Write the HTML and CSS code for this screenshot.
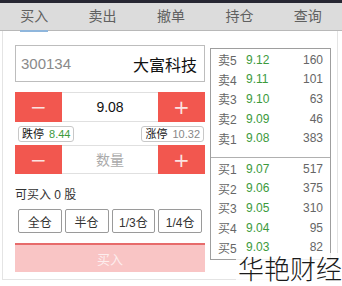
FILE: index.html
```html
<!DOCTYPE html>
<html lang="zh-CN">
<head>
    <meta charset="UTF-8">
    <meta name="viewport" content="width=device-width, initial-scale=1.0">
    <title>买入</title>
    <link rel="stylesheet" href="styles.css">
</head>
<body>
    <div class="topbar"></div>
    <div class="tabs">
        <div class="tab active">买入</div>
        <div class="tab">卖出</div>
        <div class="tab">撤单</div>
        <div class="tab">持仓</div>
        <div class="tab">查询</div>
    </div>
    <div class="container">
        <div class="trade">
            <div class="stock">
                <span class="code">300134</span>
                <span class="name">大富科技</span>
            </div>
            <div class="stepper price">
                <button class="step">−</button>
                <div class="value">9.08</div>
                <button class="step">+</button>
            </div>
            <div class="limits">
                <span class="limit">跌停 <em>8.44</em></span>
                <span class="limit">涨停 <em class="grey">10.32</em></span>
            </div>
            <div class="stepper">
                <button class="step">−</button>
                <div class="value placeholder">数量</div>
                <button class="step">+</button>
            </div>
            <div class="avail">可买入 0 股</div>
            <div class="portions">
                <button>全仓</button>
                <button>半仓</button>
                <button>1/3仓</button>
                <button>1/4仓</button>
            </div>
            <button class="buy">买入</button>
        </div>
        <div class="book">
            <div class="side sell">
                <div class="row"><span class="lbl">卖5</span><span class="px">9.12</span><span class="vol">160</span></div>
                <div class="row"><span class="lbl">卖4</span><span class="px">9.11</span><span class="vol">101</span></div>
                <div class="row"><span class="lbl">卖3</span><span class="px">9.10</span><span class="vol">63</span></div>
                <div class="row"><span class="lbl">卖2</span><span class="px">9.09</span><span class="vol">46</span></div>
                <div class="row"><span class="lbl">卖1</span><span class="px">9.08</span><span class="vol">383</span></div>
            </div>
            <div class="side">
                <div class="row"><span class="lbl">买1</span><span class="px">9.07</span><span class="vol">517</span></div>
                <div class="row"><span class="lbl">买2</span><span class="px">9.06</span><span class="vol">375</span></div>
                <div class="row"><span class="lbl">买3</span><span class="px">9.05</span><span class="vol">310</span></div>
                <div class="row"><span class="lbl">买4</span><span class="px">9.04</span><span class="vol">95</span></div>
                <div class="row"><span class="lbl">买5</span><span class="px">9.03</span><span class="vol">82</span></div>
            </div>
        </div>
    </div>
    <div class="watermark">华艳财经</div>
</body>
</html>
```
FILE: styles.css
```css
body {
    margin: 0;
    width: 342px;
    height: 286px;
    overflow: hidden;
    background: #fff;
    font-family: "Liberation Sans", "Noto Sans CJK SC", sans-serif;
    color: #333;
    position: relative;
}
.topbar {
    height: 3px;
    background: #272733;
}
.tabs {
    display: flex;
    height: 27px;
    background: #dcdcdc;
    border-bottom: 1px solid #b8b8b8;
}
.tab {
    flex: 1;
    text-align: center;
    font-size: 14px;
    line-height: 27px;
    color: #606060;
    position: relative;
}
.tab.active::after {
    content: "";
    position: absolute;
    left: 20px;
    width: 28px;
    bottom: -2px;
    height: 2px;
    background: #8fb6dc;
}
.container {
    display: flex;
    margin: 0 4px 0 2px;
    height: 249px;
    border: 1px solid #e4e4e4;
    border-top: none;
    box-sizing: border-box;
    padding: 14px 0 0 12px;
    gap: 5px;
}
.trade {
    width: 190px;
    display: flex;
    flex-direction: column;
}
.stock {
    display: flex;
    justify-content: space-between;
    align-items: center;
    height: 37px;
    border: 1px solid #bdbdbd;
    box-sizing: border-box;
    padding: 0 7px 0 5px;
}
.code {
    font-size: 15px;
    color: #8a8a8a;
}
.name {
    font-size: 16px;
    color: #111;
}
.stepper {
    display: flex;
    height: 30px;
    margin-top: 10px;
}
.limits + .stepper {
    margin-top: 3px;
    height: 29px;
}
.step {
    width: 47px;
    border: none;
    background: #f2574f;
    color: #fbe3e1;
    font-size: 20px;
    padding: 0;
    font-family: "DejaVu Sans", sans-serif;
}
.value {
    flex: 1;
    text-align: center;
    font-size: 14px;
    line-height: 28px;
    color: #111;
    border-top: 1px solid #e0e0e0;
    border-bottom: 1px solid #e0e0e0;
}
.value.placeholder {
    color: #aaa;
}
.limits {
    display: flex;
    justify-content: space-between;
    padding: 4px 1px 0 3px;
    height: 16px;
}
.limit {
    font-size: 11px;
    line-height: 14px;
    color: #111;
    border: 1px solid #c8c8c8;
    border-radius: 3px;
    padding: 0 3px;
}
.limit em {
    font-style: normal;
    color: #3c9a3c;
    margin-left: 2px;
}
.limit em.grey {
    color: #888;
}
.avail {
    font-size: 12px;
    line-height: 14px;
    color: #333;
    margin-top: 14px;
    height: 14px;
}
.portions {
    display: flex;
    gap: 3px;
    padding: 0 3px;
    margin-top: 7px;
}
.portions button {
    flex: 1;
    height: 24px;
    background: #fff;
    border: 1px solid #9a9a9a;
    border-radius: 2px;
    font-size: 12px;
    color: #333;
    padding: 0;
    font-family: inherit;
}
.buy {
    margin-top: 10px;
    height: 29px;
    border: none;
    border-top: 2px solid #e76b6b;
    background: #f9c5c5;
    color: #fdeeee;
    font-size: 13px;
    font-family: inherit;
}
.book {
    width: 121px;
    height: 212px;
    margin-top: 3px;
    border: 1px solid #9e9e9e;
    box-sizing: border-box;
    display: flex;
    flex-direction: column;
}
.side {
    padding: 1px 0 0;
}
.side.sell {
    border-bottom: 1px solid #b0b0b0;
    padding: 1px 0 9px;
}
.row {
    display: flex;
    align-items: center;
    height: 19.6px;
    font-size: 12px;
    padding: 0 7px 0 7px;
}
.lbl {
    width: 28px;
    color: #666;
}
.px {
    color: #3c9a3c;
}
.vol {
    flex: 1;
    text-align: right;
    color: #666;
}
.watermark {
    position: absolute;
    left: 236px;
    top: 253px;
    white-space: nowrap;
    font-family: "Noto Sans CJK SC", sans-serif;
    font-weight: 300;
    font-size: 26px;
    line-height: 30px;
    color: #1a1a1a;
    background: rgba(255, 255, 255, 0.85);
    padding: 0 2px;
}
```
